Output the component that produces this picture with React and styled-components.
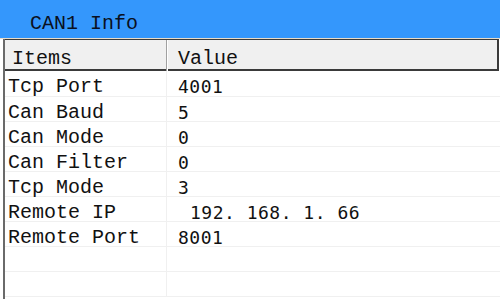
import React from "react";
import styled, { createGlobalStyle } from "styled-components";

const GlobalStyle = createGlobalStyle`
  html, body {
    margin: 0;
    padding: 0;
    background: #ffffff;
  }
  body {
    font-family: "Liberation Mono", "DejaVu Sans Mono", monospace;
  }
`;

const rows = [
  { item: "Tcp Port", value: "4001" },
  { item: "Can Baud", value: "5" },
  { item: "Can Mode", value: "0" },
  { item: "Can Filter", value: "0" },
  { item: "Tcp Mode", value: "3" },
  { item: "Remote IP", value: "192. 168. 1. 66", indent: true },
  { item: "Remote Port", value: "8001" },
  { item: "", value: "" },
  { item: "", value: "" },
];

const App = () => {
  return (
    <Window>
      <GlobalStyle />
      <TitleBar>CAN1 Info</TitleBar>
      <Table>
        <HeaderRow>
          <HeaderCell>Items</HeaderCell>
          <HeaderCell $last>Value</HeaderCell>
        </HeaderRow>
        {rows.map((r, i) => (
          <Row key={i} $first={i === 0}>
            <Cell>{r.item}</Cell>
            <Cell $value $indent={r.indent}>
              {r.value}
            </Cell>
          </Row>
        ))}
      </Table>
    </Window>
  );
};

const Window = styled.div`
  width: 500px;
  height: 299px;
  overflow: hidden;
  background: #fff;
  display: flex;
  flex-direction: column;
`;

const TitleBar = styled.div`
  height: 39px;
  background: #3497fc;
  color: #0a1020;
  font-size: 20px;
  line-height: 47px;
  padding-left: 30px;
  border-bottom: 1px solid #e8dcc8;
  box-sizing: border-box;
  flex-shrink: 0;
`;

const Table = styled.div`
  margin-left: 3px;
  flex: 1;
  border-left: 2px solid #6a6a6a;
  display: flex;
  flex-direction: column;
`;

const HeaderRow = styled.div`
  display: grid;
  grid-template-columns: 162px 1fr;
  height: 32px;
  box-sizing: border-box;
  background: #f0f0f0;
  border-top: 1px solid #3a3a3a;
  border-bottom: 2px solid #3a3a3a;
  border-right: 2px solid #3a3a3a;
  margin-right: 1px;
`;

const HeaderCell = styled.div`
  font-size: 20px;
  line-height: 31px;
  padding-top: 3px;
  color: #111;
  padding-left: ${(p) => (p.$last ? "11px" : "7px")};
  border-right: ${(p) => (p.$last ? "none" : "1px solid #a0a0a0")};
  box-shadow: ${(p) => (p.$last ? "none" : "1px 0 0 #ffffff")};
`;

const Row = styled.div`
  display: grid;
  grid-template-columns: 162px 1fr;
  height: ${(p) => (p.$first ? "26px" : "25px")};
  box-sizing: border-box;
  border-bottom: 1px solid #f0f0f0;
`;

const Cell = styled.div`
  font-size: 20px;
  line-height: 25px;
  padding-top: 3px;
  color: #111;
  white-space: pre;
  padding-left: ${(p) => (p.$value ? (p.$indent ? "23px" : "11px") : "3px")};
  border-right: ${(p) => (p.$value ? "none" : "1px solid #f0f0f0")};
  font-family: ${(p) =>
    p.$value ? '"DejaVu Sans Mono", monospace' : '"Liberation Mono", monospace'};
  ${(p) => p.$value && "font-size: 18px; letter-spacing: 0.5px;"}
`;

export default App;
